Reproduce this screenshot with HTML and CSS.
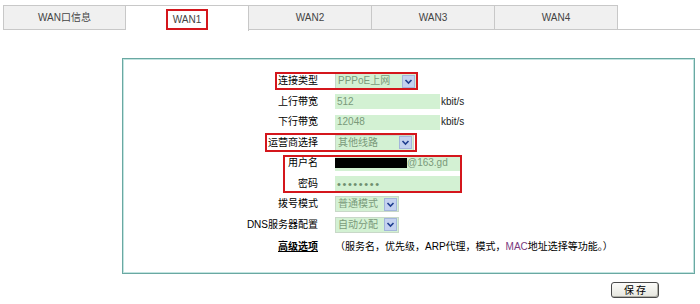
FILE: index.html
```html
<!DOCTYPE html>
<html lang="zh-CN">
<head>
    <meta charset="UTF-8">
    <title>WAN设置</title>
    <link rel="stylesheet" href="styles.css">
</head>
<body>
    <div class="tabs">
        <div class="tab">WAN口信息</div>
        <div class="tab active"><span class="mark-tab">WAN1</span></div>
        <div class="tab">WAN2</div>
        <div class="tab">WAN3</div>
        <div class="tab">WAN4</div>
    </div>

    <div class="panel">
        <div class="form">
            <div class="label">连接类型</div>
            <div class="field">
                <span class="select w82"><span class="value">PPPoE上网</span><span class="arrow"><svg width="9" height="9" viewBox="0 0 9 9"><path d="M1.5 3 L4.5 6 L7.5 3" fill="none" stroke="#1f3f8f" stroke-width="1.6"/></svg></span></span>
            </div>

            <div class="label">上行带宽</div>
            <div class="field"><span class="input w105">512</span><span class="unit">kbit/s</span></div>

            <div class="label">下行带宽</div>
            <div class="field"><span class="input w105">12048</span><span class="unit">kbit/s</span></div>

            <div class="label">运营商选择</div>
            <div class="field">
                <span class="select w79"><span class="value">其他线路</span><span class="arrow"><svg width="9" height="9" viewBox="0 0 9 9"><path d="M1.5 3 L4.5 6 L7.5 3" fill="none" stroke="#1f3f8f" stroke-width="1.6"/></svg></span></span>
            </div>

            <div class="label">用户名</div>
            <div class="field"><span class="input w125"><span class="hidden"></span>@163.gd</span></div>

            <div class="label">密码</div>
            <div class="field"><span class="input w125 dots">••••••••</span></div>

            <div class="label">拨号模式</div>
            <div class="field">
                <span class="select w64"><span class="value">普通模式</span><span class="arrow"><svg width="9" height="9" viewBox="0 0 9 9"><path d="M1.5 3 L4.5 6 L7.5 3" fill="none" stroke="#1f3f8f" stroke-width="1.6"/></svg></span></span>
            </div>

            <div class="label">DNS服务器配置</div>
            <div class="field">
                <span class="select w64"><span class="value">自动分配</span><span class="arrow"><svg width="9" height="9" viewBox="0 0 9 9"><path d="M1.5 3 L4.5 6 L7.5 3" fill="none" stroke="#1f3f8f" stroke-width="1.6"/></svg></span></span>
            </div>

            <div class="label last"><a class="adv" href="#">高级选项</a></div>
            <div class="field last">（服务名，优先级，ARP代理，模式，<span class="mac">MAC</span>地址选择等功能。）</div>
        </div>

        <!-- annotation boxes drawn over the form -->
        <div class="mark mark-type"></div>
        <div class="mark mark-isp"></div>
        <div class="mark mark-account"></div>
    </div>

    <div class="actions">
        <button class="save">保 存</button>
    </div>
</body>
</html>
```

FILE: styles.css
```css
* {
    margin: 0;
    padding: 0;
    box-sizing: border-box;
}

body {
    font-family: 'Liberation Sans', 'Noto Sans CJK SC', sans-serif;
    font-size: 10px;
    line-height: 12px;
    color: #000;
    background: #fff;
    width: 700px;
    height: 304px;
    overflow: hidden;
}

.tabs {
    display: flex;
    margin: 5px 0 0 3px;
    border-bottom: 1px solid #c8c8c8;
    height: 25px;
}

.tab {
    width: 123px;
    height: 25px;
    background: #f0f0f0;
    border: 1px solid #c8c8c8;
    border-left: none;
    color: #444;
    text-align: center;
    padding-top: 6px;
}

.tab:first-child {
    border-left: 1px solid #c8c8c8;
}

.tab.active {
    background: #fff;
    height: 26px;
    padding-top: 3px;
    border-bottom: none;
}

.mark-tab {
    display: inline-block;
    height: 21px;
    padding: 3px 5px 0;
    border: 2px solid #d4161c;
    color: #444;
}

.panel {
    position: relative;
    margin: 28px 0 0 122px;
    width: 573px;
    height: 216px;
    border: 1px solid #6aa8a2;
    box-shadow: inset 0 0 0 1px #c2e4e0;
}

.form {
    display: grid;
    grid-template-columns: 195px auto;
    grid-auto-rows: 20.5px;
    column-gap: 17px;
    align-items: center;
    padding-top: 12px;
}

.label {
    text-align: right;
    white-space: nowrap;
}

.field {
    display: flex;
    align-items: center;
    white-space: nowrap;
}

.label.last,
.field.last {
    margin-top: 4px;
}

.input {
    display: flex;
    align-items: center;
    height: 15px;
    padding-left: 2px;
    background: #d3f1d3;
    color: #7a9a7a;
}

.w105 { width: 105px; }
.w125 { width: 125px; }
.w82 { width: 82px; }
.w79 { width: 79px; }
.w64 { width: 64px; }

.unit {
    color: #222;
    margin-left: 1px;
}

.hidden {
    display: inline-block;
    width: 72px;
    height: 10px;
    margin-left: -2px;
    background: #000;
}

.dots {
    font-size: 11px;
    letter-spacing: 1.6px;
    color: #6f8f6f;
}

.select {
    display: flex;
    align-items: center;
    justify-content: space-between;
    height: 16px;
    padding: 1px 1px 1px 2px;
    background: #d3f1d3;
    border: 1px solid #c8d8c8;
}

.select .value {
    color: #7a9a7a;
}

.arrow {
    display: flex;
    align-items: center;
    justify-content: center;
    width: 13px;
    height: 13px;
    background: #c4d2ef;
    border: 1px solid #a3b5dc;
}

.adv {
    color: #000;
    font-weight: bold;
    text-decoration: underline;
}

.mac {
    color: #7a3a7e;
}

.mark {
    position: absolute;
    border: 2px solid #d4161c;
}

.mark-type {
    left: 152px;
    top: 13px;
    width: 143px;
    height: 18px;
}

.mark-isp {
    left: 142px;
    top: 74px;
    width: 152px;
    height: 19px;
}

.mark-account {
    left: 160px;
    top: 96px;
    width: 179px;
    height: 38px;
}

.actions {
    display: flex;
    justify-content: flex-end;
    width: 659px;
    margin-top: 8px;
}

.save {
    width: 48px;
    height: 16px;
    font-family: 'Noto Sans CJK SC', sans-serif;
    font-size: 10px;
    line-height: 12px;
    color: #000;
    background: linear-gradient(#fcfcfa, #e6e6de);
    border: 1px solid #4a4a4a;
    border-radius: 3px;
    box-shadow: inset -1px -1px 0 #b0b0a8;
}
```
